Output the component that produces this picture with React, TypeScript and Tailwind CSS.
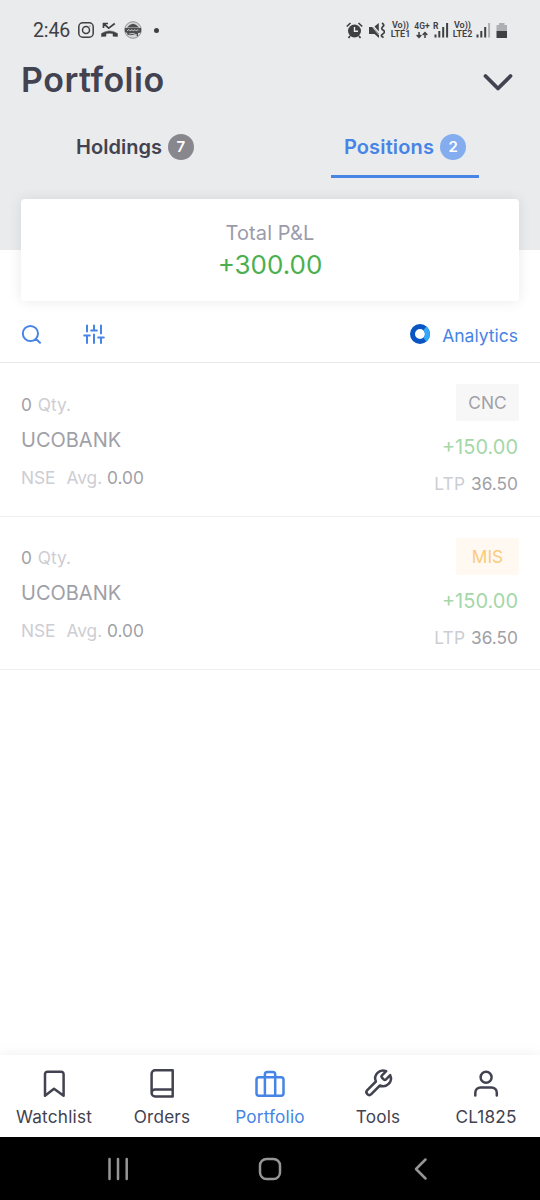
import React from "react";

const positions = [
  { product: "CNC", badge: "bg-[#f7f7f8] text-[#a0a0a5]" },
  { product: "MIS", badge: "bg-[#fff9f2] text-[#fbca7c]" },
];

const Stroke = ({ d, size = 32, w = 2.5, className = "" }: { d: string; size?: number; w?: number; className?: string }) => (
  <svg width={size} height={size} viewBox={`0 0 ${size} ${size}`} fill="none" stroke="currentColor" strokeWidth={w} strokeLinecap="round" strokeLinejoin="round" className={className}>
    <path d={d} />
  </svg>
);

const tabs = [
  { label: "Watchlist", d: "M25.6 28.7 16 21.800 7 28.7V7.2a2.500 2.500 0 0 1 2.500-2.500h13.600a2.500 2.500 0 0 1 2.500 2.500z" },
  { label: "Orders", d: "M5.600 26.200V6.800a3.500 3.500 0 0 1 3.500-3.500H26.700V29.500H9.100a3.500 3.500 0 0 1 0-7H26.700" },
  { label: "Portfolio", active: true, d: "M5 10.300h22a2.500 2.500 0 0 1 2.500 2.500v13.400a2.500 2.500 0 0 1-2.500 2.500H5a2.500 2.500 0 0 1-2.500-2.500V12.800A2.500 2.500 0 0 1 5 10.300zM10.900 28.700V7.500a2.500 2.500 0 0 1 2.500-2.500h5.300a2.500 2.500 0 0 1 2.500 2.500v21.200" },
  { label: "Tools", d: "M19.800 8.600a1.400 1.400 0 0 0 0 1.900l2.100 2.100a1.400 1.400 0 0 0 1.900 0l4.400-4.400a7.800 7.800 0 0 1-10.300 10.300l-8.600 8.600a2.800 2.800 0 0 1-4-4l8.600-8.600A7.800 7.800 0 0 1 24.200 4.200z" },
  { label: "CL1825", d: "M5.300 28.500v-2.800a5.300 5.300 0 0 1 5.300-5.300h10.900a5.300 5.300 0 0 1 5.300 5.300v2.800M21.600 10.200a5.500 5.500 0 1 1-11 0a5.500 5.500 0 1 1 11 0z" },
];

const Signal = ({ weak = false }: { weak?: boolean }) => (
  <svg width="15" height="16" viewBox="0 0 15 16" fill="#404044">
    <rect x="0.500" y="12.500" width="2" height="3" />
    <rect x="4.300" y="9" width="2" height="6.500" />
    <rect x="8.200" y="5" width="2" height="10.500" />
    <rect x="12.100" y="1" width="2" height="14.500" fill={weak ? "#aeafb2" : "#404044"} />
  </svg>
);

const Volte = ({ n }: { n: number }) => (
  <div className="flex w-[21px] flex-col items-center text-[9px] leading-[9px] font-semibold whitespace-nowrap">
    <span>Vo))</span>
    <span>LTE{n}</span>
  </div>
);

function StatusBar() {
  return (
    <div className="flex h-[60px] items-center justify-between pr-[32px] pl-[33px] font-[Roboto,sans-serif] text-[#404044]">
      <div className="flex items-center">
        <span className="w-[45px] pt-[2px] text-[19.500px] tracking-[-0.100px]">2:46</span>
        <svg width="16" height="16" viewBox="0 0 16 16" fill="none" stroke="currentColor" strokeWidth="1.500">
          <rect x="0.800" y="0.800" width="14.400" height="14.400" rx="4" />
          <circle cx="8" cy="8" r="3.500" />
          <circle cx="12" cy="4" r="0.600" fill="currentColor" stroke="none" />
        </svg>
        <svg width="17" height="16" viewBox="0 0 17 16" className="ml-[7px]">
          <path d="M2.500 6V1.500H7M3 2l4.700 4.200L13.800 1.500" fill="none" stroke="currentColor" strokeWidth="1.700" />
          <path d="M.5 11.500Q8.500 6.300 16.500 11.500V14.500L12 14.200V11.600Q8.500 10.700 5 11.600V14.200L.5 14.500z" fill="currentColor" stroke="currentColor" strokeWidth="0.500" strokeLinejoin="round" />
        </svg>
        <svg width="18" height="18" viewBox="0 0 18 18" className="ml-[6px]">
          <circle cx="9" cy="9" r="8.300" fill="#d4d5d6" stroke="#8a8a8d" strokeWidth="0.900" />
          <path d="M3 6.500Q9-.8 15 6.500zM1 7h16v4.500l-3 .5v3.500l-3-2-5 .8-2.800-.8V12L1 11z" fill="#4d4d50" />
          <path d="M3 9.800l2-1.300 1 1.400 2-1.300 1 1.300 2-1.300 1 1.300 2-1.300 1 1M5 13q4-1.700 8 1" fill="none" stroke="#dcdddd" strokeWidth="0.800" />
        </svg>
        <span className="ml-[12px] size-[5px] rounded-full bg-[#404044]" />
      </div>
      <div className="flex items-center">
        <svg width="17" height="17" viewBox="0 0 17 17" fill="none" stroke="currentColor">
          <circle cx="8.500" cy="9" r="6.500" fill="currentColor" stroke="none" />
          <path d="M.8 4.500 4.500 1M16.200 4.500 12.500 1M4 14l-1.500 2M13 14l1.500 2" strokeWidth="1.700" />
          <path d="M8.500 5v4.300h3.500" stroke="#ecedef" strokeWidth="1.400" />
        </svg>
        <svg width="16" height="17" viewBox="0 0 16 17" className="ml-[6px]" fill="currentColor">
          <path d="M0 5h4l6 7v4L5.500 12H0zM5.500 4.500 9.800 1v8.500z" />
          <path d="M.5 1.500 10 13" stroke="#ecedef" strokeWidth="0.700" />
          <path d="M13 1q3 1.800.8 3.700t.5 3.600-.5 3.600.8 3.600" fill="none" stroke="currentColor" strokeWidth="1.700" />
        </svg>
        <div className="ml-[5px]"><Volte n={1} /></div>
        <div className="ml-[3px] flex w-4 flex-col items-center text-[8.500px] leading-[9px] font-semibold">
          <span>4G+</span>
          <svg width="12" height="8" viewBox="0 0 12 8" fill="none" stroke="currentColor" strokeWidth="1.500">
            <path d="M3 1v5.500M.7 4 3 6.500 5.300 4M9 7V1.500M6.700 4 9 1.500 11.300 4" />
          </svg>
        </div>
        <div className="relative ml-1">
          <span className="absolute top-0 left-[-1px] text-[8.500px] leading-[8px] font-bold">R</span>
          <Signal />
        </div>
        <div className="ml-[3px]"><Volte n={2} /></div>
        <div className="ml-[3px]"><Signal weak /></div>
        <svg width="12" height="17" viewBox="0 0 12 17" className="ml-[5px]">
          <path d="M3 1h5.500v2H11v6H.5V3H3z" fill="#aeafb2" />
          <path d="M.5 9H11v7H.5z" fill="currentColor" />
        </svg>
      </div>
    </div>
  );
}

export default function App() {
  return (
    <div className="flex h-[1200px] w-[540px] flex-col overflow-hidden bg-white font-[Inter,sans-serif] text-[#424250]">
      <header className="h-[250px] shrink-0 bg-[#eaebed]">
        <StatusBar />
        <div className="flex h-10 items-center justify-between pr-[27px] pl-[21px]">
          <h1 className="text-[34px] leading-10 font-semibold tracking-[0.500px]">Portfolio</h1>
          <Stroke size={30} w={3.800} d="M2.500 9 15 21.500 27.500 9" className="mt-1" />
        </div>
        <div className="mt-[18px] grid h-[60px] grid-cols-2 text-[20px] font-semibold">
          <div className="mx-auto flex w-[148px] items-center justify-center gap-[6px] border-b-[3px] border-transparent">
            <span className="pt-px">Holdings</span>
            <span className="flex size-[26px] items-center justify-center rounded-full bg-[#87878d] pt-px text-[15px] text-white">7</span>
          </div>
          <div className="mx-auto flex w-[148px] items-center justify-center gap-[6px] border-b-[3px] border-[#4684e5] text-[#4684e5]">
            <span className="pt-px tracking-[0.150px]">Positions</span>
            <span className="flex size-[26px] items-center justify-center rounded-full bg-[#83adee] pt-px text-[15px] text-white">2</span>
          </div>
        </div>
      </header>
      <section className="mx-[21px] -mt-[51px] flex h-[102px] shrink-0 flex-col items-center rounded-[4px] bg-white pt-5 shadow-[0_0_14px_rgba(0,0,0,0.09)]">
        <span className="text-[20px] leading-[28px] tracking-[0.100px] text-[#9b9baa]">Total P&amp;L</span>
        <span className="text-[26px] leading-[36px] text-[#4caf50]">+300.00</span>
      </section>
      <div className="flex h-[62px] shrink-0 items-center justify-between border-b border-[#e8e8ea] pt-[9px] pr-[22px] pl-[21px] text-[#4684e5]">
        <div className="flex items-center">
          <Stroke size={22} w={2} d="M17 9.500a7.600 7.600 0 1 1-15.200 0a7.600 7.600 0 1 1 15.200 0M15 15l4 3.700" className="mb-[2px]" />
          <Stroke size={22} w={2} d="M4 1.500v6M1.200 11.500h5.600M4 11.500v7.500M11 1.500v5M8.200 6.500h5.600M11 10.500v8.500M18 1.500v8M15.200 13.500h5.600M18 13.500v5.500" className="mb-[2px] ml-10" />
        </div>
        <div className="flex items-center">
          <svg width="22" height="22" viewBox="0 0 22 22" fill="none" strokeWidth="5" className="mb-1">
            <circle cx="11" cy="11" r="7.500" stroke="#0a55c4" />
            <path d="M15.800 5.300A7.500 7.500 0 0 1 15.800 16.700" stroke="#31a8f8" />
          </svg>
          <span className="ml-[11px] text-[17.500px]">Analytics</span>
        </div>
      </div>
      <main className="flex-1">
        {positions.map((p) => (
          <article key={p.product} className="flex h-[153.500px] justify-between border-b border-[#f0f0f2] px-[21px] text-[17.300px] text-[#a0a0a7]">
            <div className="flex flex-col pt-[29.500px]">
              <div className="leading-6">0 <span className="ml-px text-[#cdcdd3]">Qty.</span></div>
              <div className="mt-2 text-[20px] leading-[30px]">UCOBANK</div>
              <div className="mt-[11px] leading-6">
                <span className="mr-[11px] text-[#cdcdd3]">NSE</span>
                <span className="text-[#cdcdd3]">Avg.</span> 0.00
              </div>
            </div>
            <div className="flex flex-col items-end pt-[21px]">
              <div className={`flex h-[37px] w-[63px] items-center justify-center rounded-[2px] pt-px ${p.badge}`}>{p.product}</div>
              <div className="mt-[11px] pr-px text-[20px] leading-[30px] text-[#a5d7a8]">+150.00</div>
              <div className="mt-[10px] pr-px leading-6"><span className="mr-px tracking-[0.200px] text-[#cdcdd3]">LTP</span> 36.50</div>
            </div>
          </article>
        ))}
      </main>
      <nav className="grid h-[82px] shrink-0 grid-cols-5 bg-white pt-3 shadow-[0_0_14px_rgba(0,0,0,0.07)]">
        {tabs.map((t) => (
          <div key={t.label} className={t.active ? "flex flex-col items-center text-[#4684e5]" : "flex flex-col items-center"}>
            <Stroke d={t.d} />
            <span className="mt-[5.500px] text-[17.200px] leading-6 tracking-[0.200px]">{t.label}</span>
          </div>
        ))}
      </nav>
      <footer className="flex h-[63px] shrink-0 items-center bg-black text-[#969696]">
        <Stroke size={24} w={2.500} d="M2.500 2v20M11 2v20M19.700 2v20" className="ml-[107px]" />
        <Stroke size={24} w={2.500} d="M8.500 2h7a6.500 6.500 0 0 1 6.500 6.500v7a6.500 6.500 0 0 1-6.500 6.500h-7a6.500 6.500 0 0 1-6.500-6.500v-7a6.500 6.500 0 0 1 6.500-6.500z" className="ml-[127px]" />
        <Stroke size={24} w={2.500} d="M17.500 2.500 8 12l9.500 9.500" className="ml-[126px]" />
      </footer>
    </div>
  );
}
